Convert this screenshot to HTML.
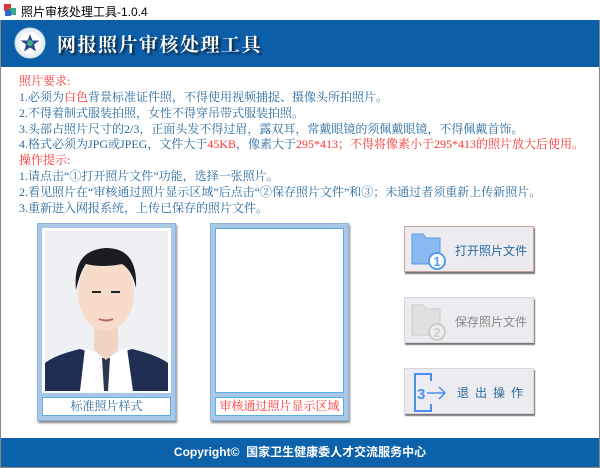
<!DOCTYPE html>
<html><head><meta charset="utf-8"><style>
*{margin:0;padding:0;box-sizing:border-box}
body{width:600px;height:468px;background:#fff;position:relative;overflow:hidden;font-family:"Liberation Serif","Noto Serif CJK SC",serif}
.tb{position:absolute;left:0;top:0;width:600px;height:20px;background:#fff;font:12px "Liberation Sans","Noto Sans CJK SC",sans-serif;color:#000}
.hd{position:absolute;left:1px;top:20px;width:598px;height:47px;background:#0b5ea8}
.ft{position:absolute;left:1px;top:438px;width:598px;height:29px;background:#0b62aa;color:#fff;font:bold 12px "Liberation Sans","Noto Sans CJK SC",sans-serif;text-align:center;line-height:29px}
.bd{position:absolute;left:0;top:20px;width:600px;height:448px;border:1px solid #888;border-top:none}
.t{position:absolute;left:19px;font-size:12px;color:#2a6a9e;white-space:nowrap;line-height:14px}
.r{color:#f33}
.fr{position:absolute;top:223px;width:139px;height:198px;background:#a9c8e8;border:1px solid #8fb4dc;box-shadow:1px 2px 2px #888}
.in{position:absolute;left:4px;top:4px;width:129px;height:165px;background:#fff;border:1px solid #5aaee0}
.lb{position:absolute;left:4px;top:173px;width:129px;height:19px;background:#fff;border:1px solid #5aaee0;font-size:12px;text-align:center;line-height:17px}
.bt{position:absolute;left:404px;width:130px;height:46px;background:#ececf0;border:1px solid #d8d8dc;box-shadow:1px 2px 1px #777;font:12px "Liberation Sans","Noto Sans CJK SC",sans-serif;color:#2a6a9e}
.bt span{position:absolute;left:50px;top:15px;white-space:nowrap}
</style></head><body>
<div class="tb"><svg style="position:absolute;left:3px;top:3px" width="14" height="14"><rect x="1" y="1" width="7" height="7" fill="#d33"/><rect x="6" y="5" width="7" height="7" fill="#3a8"/><rect x="2" y="7" width="6" height="6" fill="#36c"/></svg><span style="position:absolute;left:21px;top:3px">照片审核处理工具-1.0.4</span></div>
<div class="bd"></div>
<div class="hd">
<svg style="position:absolute;left:13px;top:7px" width="32" height="32"><circle cx="16" cy="16" r="15" fill="#e8eef5" stroke="#cdd" /><circle cx="16" cy="16" r="11" fill="#fff"/><path d="M16 7l2.5 6.5h7l-5.5 4 2 7-6-4-6 4 2-7-5.5-4h7z" fill="#2a4a8a"/><circle cx="16" cy="16" r="3" fill="#4a8"/></svg>
<div style="position:absolute;left:56px;top:10px;font:bold 19px 'Noto Serif CJK SC',serif;color:#fff;letter-spacing:1.5px;text-shadow:2px 2px 2px #123">网报照片审核处理工具</div>
</div>
<div class="t r" style="top:74px">照片要求:</div>
<div class="t" style="top:90px">1.必须为<span class="r">白色</span>背景标准证件照，不得使用视频捕捉、摄像头所拍照片。</div>
<div class="t" style="top:106px">2.不得着制式服装拍照，女性不得穿吊带式服装拍照。</div>
<div class="t" style="top:122px">3.头部占照片尺寸的2/3，正面头发不得过眉，露双耳，常戴眼镜的须佩戴眼镜，不得佩戴首饰。</div>
<div class="t" style="top:137px">4.格式必须为JPG或JPEG，文件大于<span class="r">45KB</span>，像素大于<span class="r">295*413；不得将像素小于295*413的照片放大后使用。</span></div>
<div class="t r" style="top:153px">操作提示:</div>
<div class="t" style="top:169px">1.请点击“①打开照片文件”功能，选择一张照片。</div>
<div class="t" style="top:185px">2.看见照片在“审核通过照片显示区域”后点击“②保存照片文件”和③；未通过者须重新上传新照片。</div>
<div class="t" style="top:201px">3.重新进入网报系统，上传已保存的照片文件。</div>
<div class="fr" style="left:37px"><div class="in" style="border:none;background:#fff">
<svg width="129" height="165" style="position:absolute;left:0;top:0"><rect x="3" y="3" width="123" height="160" fill="#eef0f4"/>
<path d="M3 163V135q10-8 35-14l26 8 26-8q25 6 36 14v28z" fill="#1f2e52"/>
<path d="M43 120l21 10 21-10 6 43H38z" fill="#fff"/><path d="M60 130h8l-2 33h-4z" fill="#2a3550"/>
<path d="M52 100h24v22l-12 10-12-10z" fill="#f2d2c0"/>
<ellipse cx="64" cy="65" rx="28" ry="38" fill="#f7dccb"/>
<path d="M34 62q-4-40 30-42q32 0 30 40q-4-18-14-24q-20 4-36 0q-6 8-10 26z" fill="#1a1c22"/>
<path d="M50 64h9M69 64h9" stroke="#222" stroke-width="2"/><path d="M57 91q7 3 14 0" stroke="#b66" stroke-width="2" fill="none"/></svg></div>
<div class="lb" style="color:#2a6a9e">标准照片样式</div></div>
<div class="fr" style="left:210px"><div class="in"></div><div class="lb" style="color:#f33">审核通过照片显示区域</div></div>
<div class="bt" style="top:226px;border-color:#c9a0a0"><svg style="position:absolute;left:4px;top:3px" width="40" height="40"><path d="M3 4h11l3 4h14v26H3z" fill="#8ab8f0" stroke="#5a9ae8"/><circle cx="28" cy="31" r="8" fill="#fff" stroke="#5a9ae8" stroke-width="2"/><text x="28" y="36" font-size="13" font-weight="bold" fill="#5a9ae8" text-anchor="middle" font-family="Liberation Sans">1</text></svg><span>打开照片文件</span></div>
<div class="bt" style="top:297px;color:#888"><svg style="position:absolute;left:4px;top:3px" width="40" height="40"><path d="M3 4h11l3 4h14v26H3z" fill="#e0e0e0" stroke="#ccc"/><circle cx="28" cy="31" r="8" fill="#eee" stroke="#ccc" stroke-width="2"/><text x="28" y="36" font-size="13" font-weight="bold" fill="#ccc" text-anchor="middle" font-family="Liberation Sans">2</text></svg><span>保存照片文件</span></div>
<div class="bt" style="top:368px"><svg style="position:absolute;left:4px;top:3px" width="40" height="40"><path d="M22 9V2H6v37h16v-7" fill="none" stroke="#4a8ef0" stroke-width="2"/><text x="8" y="27" font-size="15" font-weight="bold" fill="#4a8ef0" font-family="Liberation Sans">3</text><path d="M18 21h18M30 15l6 6-6 6" stroke="#4a8ef0" stroke-width="1.5" fill="none"/></svg><span style="left:52px;letter-spacing:6px">退出操作</span></div>
<div class="ft">Copyright© &nbsp;国家卫生健康委人才交流服务中心</div>
</body></html>
